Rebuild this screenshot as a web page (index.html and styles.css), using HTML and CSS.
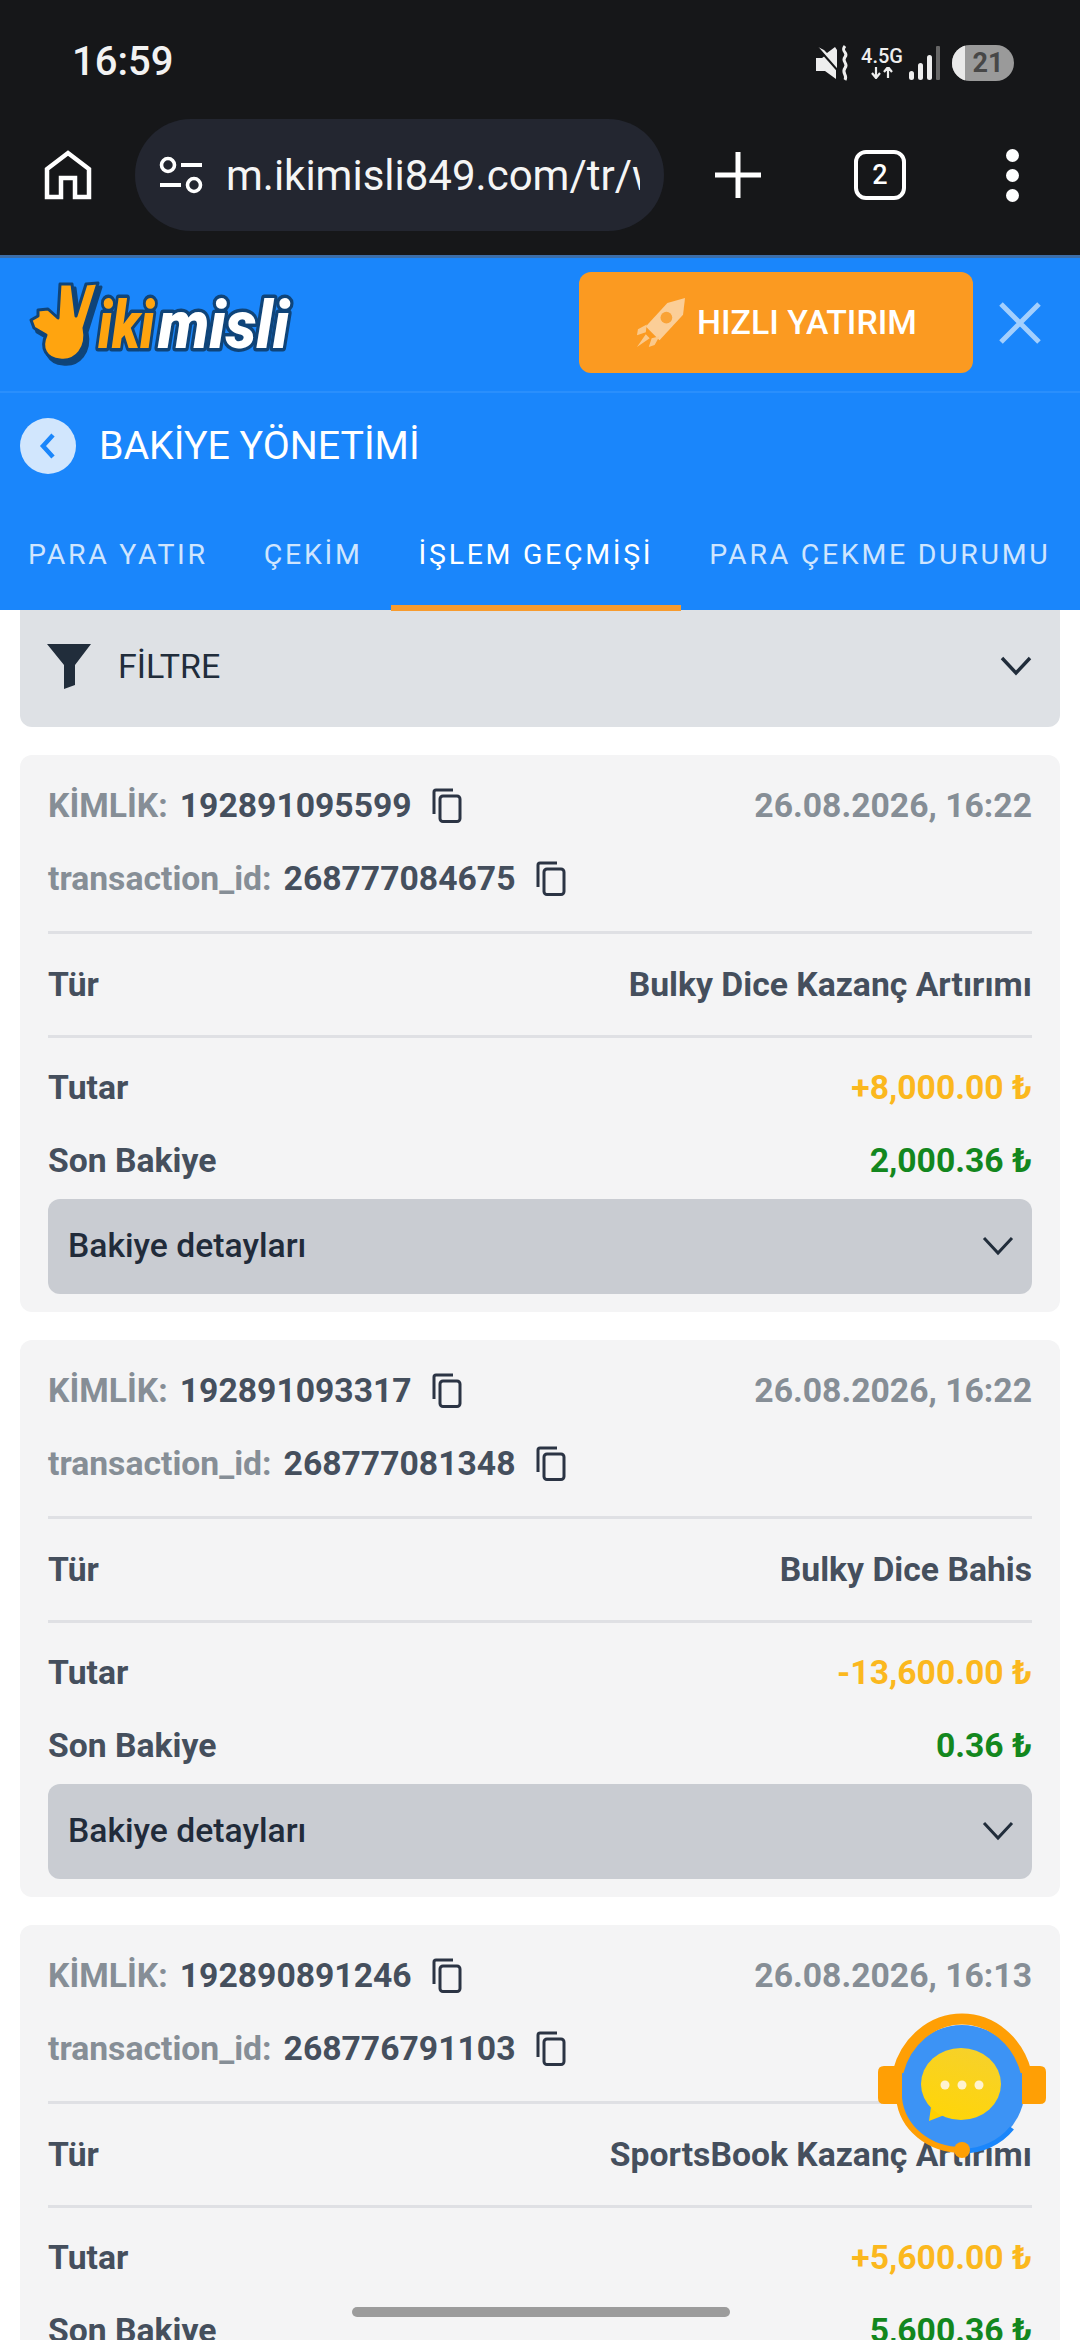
FILE: index.html
```html
<!DOCTYPE html>
<html lang="tr">
<head>
<meta charset="utf-8">
<title>Bakiye Yönetimi</title>
<link rel="stylesheet" href="styles.css">
</head>
<body>
<div class="screen">
  <section class="chrome">
    <div class="status">
      <span class="time">16:59</span>
      <div class="status-icons">
        <svg class="ic-mute" viewBox="0 0 35 36"><path d="M1 13h6l4-3 10 11v13l-11-8H1z" fill="#eee"/><path d="M3 2l19 22V5l-2-3-8 6-3-3z" fill="#eee"/><path d="M2 2l22 25" stroke="#161719" stroke-width="2"/><path d="M30 1c-5 6 4 6 0 11s4 6 0 11 3 7 0 12" fill="none" stroke="#eee" stroke-width="3"/></svg>
        <div class="net"><span class="net-t">4.5G</span><svg viewBox="0 0 24 12" class="net-a"><path d="M6 0v10M2 6l4 5 4-5M18 11V1M14 5l4-5 4 5" fill="none" stroke="#eee" stroke-width="2.2"/></svg></div>
        <svg class="ic-sig" viewBox="0 0 32 36"><rect x="1" y="26" width="5" height="9" rx="2.5" fill="#eee"/><rect x="10" y="18" width="5" height="17" rx="2.5" fill="#eee"/><rect x="19" y="10" width="5" height="25" rx="2.5" fill="#eee"/><rect x="28" y="1" width="4" height="34" rx="1" fill="#666"/></svg>
        <div class="batt"><span class="batt-fill"></span><span class="batt-n">21</span></div>
      </div>
    </div>
    <div class="toolbar">
      <svg class="ic-home" viewBox="0 0 48 50"><path d="M3 47V19L24 3l21 16v28H31V28H17v19z" fill="none" stroke="#fff" stroke-width="4.5" stroke-linejoin="miter"/></svg>
      <div class="pill">
        <svg class="ic-tune" viewBox="0 0 44 38"><circle cx="9" cy="9" r="6.5" fill="none" stroke="#fff" stroke-width="3.6"/><path d="M22 9h21M1 29h21" stroke="#fff" stroke-width="4"/><circle cx="35" cy="29" r="6.5" fill="none" stroke="#fff" stroke-width="3.6"/></svg>
        <span class="url">m.ikimisli849.com/tr/wallet</span>
      </div>
      <svg class="ic-plus" viewBox="0 0 46 46"><path d="M23 0v46M0 23h46" stroke="#fff" stroke-width="5"/></svg>
      <div class="tabs-count">2</div>
      <div class="dots"><i></i><i></i><i></i></div>
    </div>
  </section>

  <header class="head">
    <div class="brand-row">
      <svg class="logo" viewBox="0 0 270 90">
        <path class="hand-bg" d="M35 8L47 8L51 40L61 8L73 7L59 52C63 72 51 86 35 84C21 83 15 72 21 59L9 52L6 44L13 40L13 34L23 33L33 42Z"/>
        <text x="70" y="68" class="logo-a" textLength="56" lengthAdjust="spacingAndGlyphs">iki</text>
        <text x="130" y="68" class="logo-b" textLength="131" lengthAdjust="spacingAndGlyphs">misli</text>
        <path class="hand" d="M32 4L44 4L48 36L58 4L70 3L56 48C60 68 48 82 32 80C18 79 12 68 18 55L6 48L3 40L10 36L10 30L20 29L30 38Z"/>
      </svg>
      <button class="fast">
        <svg class="rocket" viewBox="0 0 52 52"><path d="M51 1l-2 17-24 26-14-14L33 6z" fill="#fce0bf"/><circle cx="32" cy="21" r="6" fill="#f9a63f"/><path d="M12 28L3 33l-1 6 9-3zM25 40l-5 9-6 2 3-9zM11 38l-9 13 13-9z" fill="#fcd9ad"/></svg>
        HIZLI YATIRIM
      </button>
      <svg class="close" viewBox="0 0 42 42"><path d="M2 2l38 38M40 2L2 40" stroke="#a3cffd" stroke-width="5"/></svg>
    </div>
    <div class="title-row">
      <span class="back"><svg viewBox="0 0 20 30"><path d="M15 4L5 15l10 11" fill="none" stroke="#1a86fb" stroke-width="4.5"/></svg></span>
      <h1>BAKİYE YÖNETİMİ</h1>
    </div>
    <nav class="tabs">
      <a class="tab">PARA YATIR</a>
      <a class="tab">ÇEKİM</a>
      <a class="tab active">İŞLEM GEÇMİŞİ</a>
      <a class="tab">PARA ÇEKME DURUMU</a>
    </nav>
  </header>

  <main class="content">
    <div class="filter">
      <svg class="ic-funnel" viewBox="0 0 44 46"><path d="M0 1h44L28 22v20l-11 4V22z" fill="#212d3b"/></svg>
      <span class="filter-t">FİLTRE</span>
      <svg class="chev" viewBox="0 0 32 20"><path d="M2 2l14 15L30 2" fill="none" stroke="#212d3b" stroke-width="3.4"/></svg>
    </div>

    <article class="card">
      <div class="row r-id"><span class="id"><b>KİMLİK:</b> 192891095599<svg class="copy" viewBox="0 0 30 35"><path d="M2 26V4a2 2 0 0 1 2-2h17" fill="none" stroke="#2b3444" stroke-width="3"/><rect x="8" y="8" width="20" height="25.500" rx="3" fill="none" stroke="#2b3444" stroke-width="3"/></svg></span><span class="date">26.08.2026, 16:22</span></div>
      <div class="row r-id2"><span class="id"><b>transaction_id:</b> 268777084675<svg class="copy" viewBox="0 0 30 35"><path d="M2 26V4a2 2 0 0 1 2-2h17" fill="none" stroke="#2b3444" stroke-width="3"/><rect x="8" y="8" width="20" height="25.500" rx="3" fill="none" stroke="#2b3444" stroke-width="3"/></svg></span></div>
      <div class="row r-type"><span>Tür</span><span>Bulky Dice Kazanç Artırımı</span></div>
      <div class="row r-amt"><span>Tutar</span><span class="yellow">+8,000.00 ₺</span></div>
      <div class="row r-bal"><span>Son Bakiye</span><span class="green">2,000.36 ₺</span></div>
      <div class="details"><span>Bakiye detayları</span><svg class="chev" viewBox="0 0 32 20"><path d="M2 2l14 15L30 2" fill="none" stroke="#212d3b" stroke-width="3"/></svg></div>
    </article>

    <article class="card">
      <div class="row r-id"><span class="id"><b>KİMLİK:</b> 192891093317<svg class="copy" viewBox="0 0 30 35"><path d="M2 26V4a2 2 0 0 1 2-2h17" fill="none" stroke="#2b3444" stroke-width="3"/><rect x="8" y="8" width="20" height="25.500" rx="3" fill="none" stroke="#2b3444" stroke-width="3"/></svg></span><span class="date">26.08.2026, 16:22</span></div>
      <div class="row r-id2"><span class="id"><b>transaction_id:</b> 268777081348<svg class="copy" viewBox="0 0 30 35"><path d="M2 26V4a2 2 0 0 1 2-2h17" fill="none" stroke="#2b3444" stroke-width="3"/><rect x="8" y="8" width="20" height="25.500" rx="3" fill="none" stroke="#2b3444" stroke-width="3"/></svg></span></div>
      <div class="row r-type"><span>Tür</span><span>Bulky Dice Bahis</span></div>
      <div class="row r-amt"><span>Tutar</span><span class="yellow">-13,600.00 ₺</span></div>
      <div class="row r-bal"><span>Son Bakiye</span><span class="green">0.36 ₺</span></div>
      <div class="details"><span>Bakiye detayları</span><svg class="chev" viewBox="0 0 32 20"><path d="M2 2l14 15L30 2" fill="none" stroke="#212d3b" stroke-width="3"/></svg></div>
    </article>

    <article class="card">
      <div class="row r-id"><span class="id"><b>KİMLİK:</b> 192890891246<svg class="copy" viewBox="0 0 30 35"><path d="M2 26V4a2 2 0 0 1 2-2h17" fill="none" stroke="#2b3444" stroke-width="3"/><rect x="8" y="8" width="20" height="25.500" rx="3" fill="none" stroke="#2b3444" stroke-width="3"/></svg></span><span class="date">26.08.2026, 16:13</span></div>
      <div class="row r-id2"><span class="id"><b>transaction_id:</b> 268776791103<svg class="copy" viewBox="0 0 30 35"><path d="M2 26V4a2 2 0 0 1 2-2h17" fill="none" stroke="#2b3444" stroke-width="3"/><rect x="8" y="8" width="20" height="25.500" rx="3" fill="none" stroke="#2b3444" stroke-width="3"/></svg></span></div>
      <div class="row r-type"><span>Tür</span><span>SportsBook Kazanç Artırımı</span></div>
      <div class="row r-amt"><span>Tutar</span><span class="yellow">+5,600.00 ₺</span></div>
      <div class="row r-bal"><span>Son Bakiye</span><span class="green">5,600.36 ₺</span></div>
      <div class="details"><span>Bakiye detayları</span><svg class="chev" viewBox="0 0 32 20"><path d="M2 2l14 15L30 2" fill="none" stroke="#212d3b" stroke-width="3"/></svg></div>
    </article>
  </main>

  <svg class="chat" viewBox="878 2010 170 155">
    <defs>
      <linearGradient id="bub" x1="0.7" y1="0" x2="0.3" y2="1"><stop offset="0" stop-color="#f6d12b"/><stop offset="1" stop-color="#ffd508"/></linearGradient>
    </defs>
    <circle cx="962" cy="2088" r="63" fill="#3c93f5"/>
    <path d="M1012 2128a63 63 0 0 1-50 23" fill="none" stroke="#1a86fb" stroke-width="5"/>
    <path d="M898 2072c8-31 34-53 64-53s56 22 64 53" fill="none" stroke="#ff9f05" stroke-width="11"/>
    <path d="M899 2098c3 30 30 52 63 52" fill="none" stroke="#ff9f05" stroke-width="6"/>
    <path d="M878 2072q0-6 6-6h14l4 0v38h-18q-6 0-6-6zM1046 2072q0-6-6-6h-16l-2 0v38h18q6 0 6-6z" fill="#ff9f05"/>
    <circle cx="962" cy="2150" r="8" fill="#ff9f05"/>
    <path d="M931 2107l-2 14 18-7z" fill="#ffd000"/>
    <ellipse cx="961" cy="2084" rx="40" ry="36" fill="url(#bub)"/>
    <circle cx="945" cy="2085" r="4.500" fill="#fff3cf"/><circle cx="962" cy="2085" r="4.500" fill="#fff3cf"/><circle cx="979" cy="2085" r="4.500" fill="#fff3cf"/>
  </svg>
  <div class="home-bar"></div>
</div>
</body>
</html>
```
FILE: styles.css
```css
* { box-sizing: border-box; }
html, body { margin: 0; padding: 0; }
body { background: #fff; font-family: Roboto, "Liberation Sans", sans-serif; }
.screen { position: relative; width: 1080px; height: 2340px; overflow: hidden; background: #fff; }

.chrome { height: 255px; background: #161719; color: #fff; }
.status { height: 119px; display: flex; align-items: center; justify-content: space-between; padding: 7px 66px 0 72px; }
.time { font-size: 40px; font-weight: 500; color: #f2f2f2; margin-top: -3px; }
.status-icons { display: flex; align-items: center; }
.ic-mute { width: 35px; height: 36px; margin-right: 12px; }
.net { display: flex; flex-direction: column; align-items: center; width: 40px; margin-right: 6px; }
.net-t { font-size: 20px; font-weight: 500; line-height: 19px; color: #eee; }
.net-a { width: 24px; height: 12px; margin-top: 1px; }
.ic-sig { width: 32px; height: 36px; margin-right: 12px; }
.batt { position: relative; width: 62px; height: 36px; border-radius: 18px; background: #9a9a9a; overflow: hidden; display: flex; align-items: center; justify-content: center; padding-left: 10px; }
.batt-fill { position: absolute; left: 0; top: 0; bottom: 0; width: 13px; background: #e9e9e9; }
.batt-n { font-size: 27px; font-weight: 700; color: #474747; position: relative; }

.toolbar { height: 136px; display: flex; align-items: center; padding-bottom: 24px; }
.ic-home { width: 48px; height: 50px; margin-left: 44px; flex: none; }
.pill { width: 529px; height: 112px; margin-left: 43px; border-radius: 56px; background: #232630; display: flex; align-items: center; padding-left: 24px; overflow: hidden; flex: none; }
.ic-tune { width: 44px; height: 38px; flex: none; }
.url { display: block; width: 414px; margin-left: 23px; flex: none; overflow: hidden; white-space: nowrap; font-size: 42px; color: #f5f5f5; }
.ic-plus { width: 46px; height: 46px; margin-left: 51px; flex: none; }
.tabs-count { width: 52px; height: 50px; margin-left: 93px; border: 4.500px solid #fff; border-radius: 12px; display: flex; align-items: center; justify-content: center; font-size: 27px; font-weight: 500; flex: none; }
.dots { display: flex; flex-direction: column; gap: 7px; margin-left: 100px; flex: none; }
.dots i { display: block; width: 13px; height: 13px; border-radius: 50%; background: #fff; }

.head { height: 355px; background: #1a86fb; border-top: 3px solid #3d6ea8; color: #fff; }
.brand-row { height: 135px; display: flex; align-items: center; border-bottom: 2px solid #2a8ffc; padding-left: 28px; }
.logo { width: 270px; height: 90px; flex: none; }
.hand { fill: #ffa40f; stroke: #0f4479; stroke-width: 3; stroke-linejoin: round; }
.hand-bg { fill: #0f4479; stroke: #0f4479; stroke-width: 3; stroke-linejoin: round; }
.logo-a, .logo-b { font-family: Roboto, sans-serif; font-size: 66px; font-weight: 900; font-style: italic; stroke: #0f4479; stroke-width: 7px; paint-order: stroke; stroke-linejoin: round; }
.logo-a { fill: #ffa40f; }
.logo-b { fill: #fff; }
.fast { width: 394px; height: 101px; margin-left: 281px; margin-top: -4px; border: 0; border-radius: 12px; background: #fb9a21; color: #fff; font-family: Roboto, sans-serif; font-size: 33.800px; font-weight: 500; display: flex; align-items: center; padding: 0 0 0 56px; gap: 11px; white-space: nowrap; }
.rocket { width: 51px; height: 51px; flex: none; opacity: .75; }
.close { width: 42px; height: 42px; margin-left: 26px; margin-top: -4px; flex: none; }
.title-row { height: 106px; display: flex; align-items: center; padding-left: 20px; }
.back { width: 56px; height: 56px; border-radius: 50%; background: #d1e6fd; display: flex; align-items: center; justify-content: center; }
.back svg { width: 20px; height: 30px; }
.title-row h1 { margin: 0 0 0 23px; font-size: 39.300px; font-weight: 400; color: #fff; }
.tabs { height: 112px; display: flex; }
.tab { display: flex; align-items: center; padding: 4px 28px 0; height: 112px; white-space: nowrap; font-size: 28.500px; letter-spacing: 2.700px; color: #cfe5fe; border-bottom: 6px solid transparent; }
.tab.active { color: #fff; border-bottom-color: #f79b2e; }

.content { padding: 0 20px; }
.filter { height: 117px; background: #dee1e5; border-radius: 0 0 12px 12px; display: flex; align-items: center; padding: 0 28px 6px 27px; margin-bottom: 28px; }
.ic-funnel { width: 44px; height: 46px; flex: none; }
.filter-t { margin-left: 27px; font-size: 34px; color: #212d3b; flex: 1; }
.chev { width: 32px; height: 20px; flex: none; }

.card { height: 557px; margin-bottom: 28px; padding: 0 28px; background: #f4f4f5; border-radius: 12px; }
.row { display: flex; justify-content: space-between; align-items: center; font-size: 33.700px; font-weight: 700; color: #454f5d; white-space: nowrap; }
.r-id { height: 100px; }
.r-id2 { height: 74px; margin-top: -14px; }
.id { display: flex; align-items: center; }
.id b { color: #868e96; font-weight: 700; margin-right: 12px; }
.copy { width: 30px; height: 35px; margin-left: 20px; }
.date { color: #868e96; }
.r-type { height: 107px; margin-top: 16px; border-top: 3px solid #dfe0e4; border-bottom: 3px solid #dfe0e4; }
.r-amt { height: 73px; margin-top: 13px; }
.r-bal { height: 73px; }
.yellow { color: #fbb81e; }
.green { color: #13871e; }
.details { height: 95px; margin-top: 2px; background: #c9ccd2; border-radius: 12px; display: flex; align-items: center; justify-content: space-between; padding: 0 18px 2px 20px; font-size: 33.700px; font-weight: 500; color: #212b3a; }

.chat { position: absolute; left: 878px; top: 2010px; width: 170px; height: 155px; }
.home-bar { position: absolute; left: 352px; top: 2307px; width: 378px; height: 10px; border-radius: 5px; background: #9c9c9c; }
```
